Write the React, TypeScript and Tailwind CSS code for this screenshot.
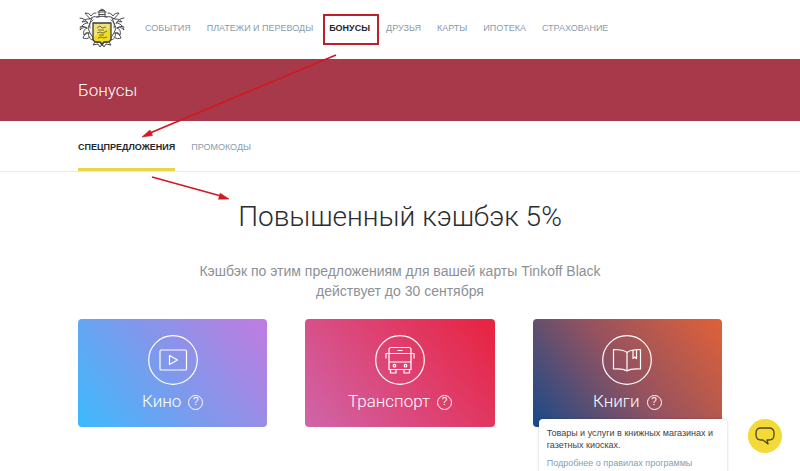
import React from "react";

const navItems = [
  "События",
  "Платежи и переводы",
  "Бонусы",
  "Друзья",
  "Карты",
  "Ипотека",
  "Страхование",
];

function Crest() {
  return (
    <svg viewBox="0 0 48 42" className="w-12 h-[42px]" fill="none" aria-hidden="true">
      <g stroke="#4a4b50" strokeWidth="1" strokeLinecap="round" strokeLinejoin="round">
        <path d="M21 10V4l3-2 3 2v6M20 5h8M21 7.500h6M19 10c2-1 8-1 10 0M22 3.500h4" />
        <path d="M20 10c-4-1-6 0-8 2-2-3-4-4-5-6 3 0 5 1 6 3 1-2 3-3 5-3M12 12c-3 0-6 0-8 3 3-1 5 0 6 1-4 0-7 3-8 7 3-3 5-3 7-2-3 1-4 4-3 7 1-2 3-3 5-2-1 3 0 6 4 7 0-2 0-3 1-4M10 16c-2-3-5-5-8-5M9 21c-3-2-5-2-7-1M11 26c-3 0-5 2-6 5 2 1 5 1 7-1M15 13c-3 2-4 5-3 8M14 11l-2 5-2 5 2 5 4 6" />
        <path d="M28 10c4-1 6 0 8 2 2-3 4-4 5-6-3 0-5 1-6 3-1-2-3-3-5-3M36 12c3 0 6 0 8 3-3-1-5 0-6 1 4 0 7 3 8 7-3-3-5-3-7-2 3 1 4 4 3 7-1-2-3-3-5-2 1 3 0 6-4 7 0-2 0-3-1-4M38 16c2-3 5-5 8-5M39 21c3-2 5-2 7-1M37 26c3 0 5 2 6 5-2 1-5 1-7-1M33 13c3 2 4 5 3 8M34 11l2 5 2 5-2 5-4 6" />
        <path d="M15 33c2 3 5 3 7 2l2 4 2-4c2 1 5 1 7-2M17 35l-2 3 5-1 2 3 2-3 2 3 2-3 5 1-2-3" />
      </g>
      <path
        d="M15 16h18v15c0 3-2 4-4 4h-3l-2 2-2-2h-3c-2 0-4-1-4-4z"
        fill="#f3dc1f"
        stroke="#3c3d42"
        strokeWidth="1.300"
      />
      <path d="M16 17h15v4l-15 9z" fill="#eee27a" />
      <path
        d="M19 21l3-2 2 2 4-1M19 26l3-1 3 1 4-2M20 31l3-1 3 1 3-1M20 23h6M21 28h5"
        stroke="#77702f"
        strokeWidth="1"
      />
    </svg>
  );
}

function MovieIcon() {
  return (
    <svg viewBox="0 0 50 50" className="w-[50px] h-[50px]" fill="none" stroke="white" strokeWidth="1.200" aria-hidden="true">
      <circle cx="25" cy="25" r="24.300" />
      <rect x="12" y="15" width="26.500" height="20" rx="1" />
      <path d="M21.500 20.500v9l8-4.500z" strokeLinejoin="round" />
    </svg>
  );
}

function BusIcon() {
  return (
    <svg viewBox="0 0 50 50" className="w-[50px] h-[50px]" fill="none" stroke="white" strokeWidth="1.200" aria-hidden="true">
      <circle cx="25" cy="25" r="24.300" />
      <path d="M14 34.500V14.500q0-2 2-2h18q2 0 2 2v20zM14 18.500h22M14 27h22M22.500 15.500h5" />
      <path d="M14 18.500h-3v5M36 18.500h3v5M15.500 34.500v3.500h5.500v-3.500M29 34.500v3.500h5.500v-3.500" />
      <circle cx="19.500" cy="30.700" r="1.300" />
      <circle cx="30.500" cy="30.700" r="1.300" />
    </svg>
  );
}

function BookIcon() {
  return (
    <svg viewBox="0 0 50 50" className="w-[50px] h-[50px]" fill="none" stroke="white" strokeWidth="1.200" strokeLinejoin="round" aria-hidden="true">
      <circle cx="25" cy="25" r="24.300" />
      <path d="M25 17.500c-3-2.500-8-3-13.500-3v19.500c5.500-.5 10.500 0 13.500 2 3-2 8-2.500 13.500-2V14.500c-5.500 0-10.500.5-13.500 3zM25 17.500V36" />
      <path d="M31 15v8.500l1.700-1.500 1.800 1.500v-9" />
    </svg>
  );
}

const offers = [
  {
    title: "Кино",
    icon: <MovieIcon />,
    background: "bg-[linear-gradient(52deg,#3dbafc,#8098ec_50%,#c27bdf)]",
  },
  {
    title: "Транспорт",
    icon: <BusIcon />,
    background: "bg-[linear-gradient(52deg,#cf66aa,#dd4374_50%,#e8223f)]",
  },
  {
    title: "Книги",
    icon: <BookIcon />,
    background: "bg-[linear-gradient(52deg,#174a89,#96525f_50%,#e06138)]",
    details: "Товары и услуги в книжных магазинах и газетных киосках.",
  },
];

function OfferCard({ offer }: { offer: (typeof offers)[number] }) {
  return (
    <article className={`relative flex flex-col items-center rounded pt-4 pb-[14px] text-white ${offer.background}`}>
      {offer.icon}
      <div className="flex items-center gap-[7px] mt-1">
        <h3 className="font-['Roboto'] font-light text-[17px] leading-6">{offer.title}</h3>
        <button
          type="button"
          aria-label={`Подробнее: ${offer.title}`}
          className="w-[15px] h-[15px] mt-0.5 rounded-full border border-white flex items-center justify-center text-[10px] leading-3"
        >
          ?
        </button>
      </div>
      {offer.details && (
        <div
          role="tooltip"
          className="absolute top-[100px] left-[6px] -right-[5px] rounded bg-white shadow-[0_0_3px_rgba(0,0,0,0.2)] px-2 pt-2 pb-4 text-[9px] leading-3 text-[#3f4145]"
        >
          <p>{offer.details}</p>
          <a href="#rules" className="block mt-[6px] text-[#7f9fb8]">
            Подробнее о правилах программы
          </a>
        </div>
      )}
    </article>
  );
}

function Arrows() {
  return (
    <svg
      viewBox="0 0 240 150"
      className="absolute left-[130px] top-[50px] w-[240px] h-[150px] pointer-events-none"
      aria-hidden="true"
    >
      <g stroke="#cf1a22" strokeWidth="1.800" fill="#d8181f">
        <path d="M206 5L20 83M22 127l69 19" fill="none" />
        <path d="M12 87l8-7 2.500 5.500zM99 149l-10.500.2 1.700-6z" strokeWidth="0.600" />
      </g>
    </svg>
  );
}

export default function App() {
  return (
    <div className="relative min-h-screen overflow-hidden bg-white font-['Liberation_Sans',sans-serif]">
      <header className="flex items-center h-[59px] px-[78px] pb-[3px] gap-[19px]">
        <a href="#home" aria-label="Tinkoff" className="shrink-0">
          <Crest />
        </a>
        <nav className="flex gap-4 text-[9px] leading-3 uppercase whitespace-nowrap text-[#8a9cab]">
          {navItems.map((item) =>
            item === "Бонусы" ? (
              <a key={item} href="#bonuses" aria-current="page" className="relative font-bold text-[#25272b]">
                {item}
                <span className="absolute -left-[6px] -right-[9px] -top-[8px] -bottom-[11px] border-2 border-[#c01f29]" />
              </a>
            ) : (
              <a key={item} href="#section">
                {item}
              </a>
            ),
          )}
        </nav>
      </header>

      <div className="flex items-center h-[62px] px-[78px] bg-[#a8394b]">
        <h1 className="font-['Roboto'] font-light text-[17px] leading-6 text-white">Бонусы</h1>
      </div>

      <nav className="flex gap-4 h-[51px] px-[78px] border-b border-[#e9eaec] text-[9px] leading-3 uppercase">
        <a href="#offers" aria-current="page" className="flex items-center font-bold text-[#25272b] border-b-3 border-[#e9d548] pt-[5px]">
          Спецпредложения
        </a>
        <a href="#promo" className="flex items-center text-[#8a9cab] pt-0.5">
          Промокоды
        </a>
      </nav>

      <main className="px-[78px] pt-[25px] pb-11">
        <h2 className="font-['Roboto'] font-light text-[28px] leading-10 text-center text-[#2b2c30]">
          Повышенный кэшбэк 5%
        </h2>
        <p className="mt-6 mx-auto max-w-[420px] text-[14px] leading-5 text-center text-[#8c9196]">
          Кэшбэк по этим предложениям для вашей карты Tinkoff Black действует до 30 сентября
        </p>
        <div className="grid grid-cols-3 gap-[38px] mt-[18px]">
          {offers.map((offer) => (
            <OfferCard key={offer.title} offer={offer} />
          ))}
        </div>
      </main>

      <Arrows />

      <button
        type="button"
        aria-label="Чат"
        className="fixed right-[18px] bottom-[18px] w-[34px] h-[34px] rounded-full bg-[#f3da36] flex items-center justify-center"
      >
        <svg viewBox="0 0 22 20" className="w-[22px] h-5" fill="none" stroke="#4e4820" strokeWidth="1.300" strokeLinejoin="round" aria-hidden="true">
          <path d="M7 2h8q5 0 5 5v2q0 5-5 5h-2l1 4-5-4H7q-5 0-5-5V7q0-5 5-5z" />
        </svg>
      </button>
    </div>
  );
}
